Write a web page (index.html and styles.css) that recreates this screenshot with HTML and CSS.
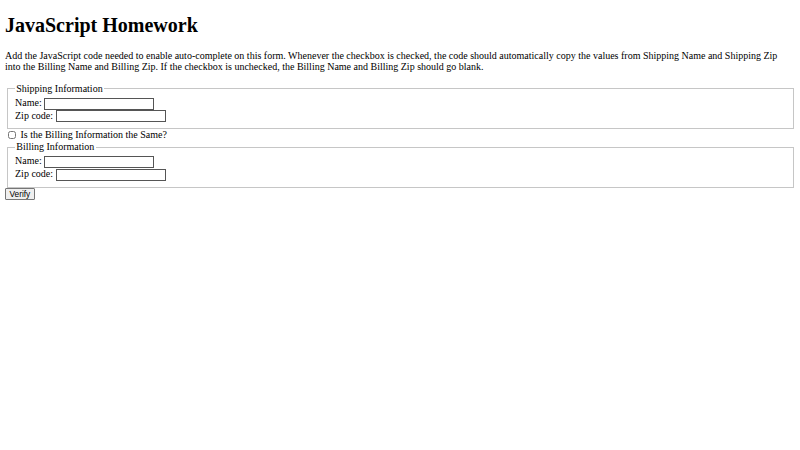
FILE: index.html
```html
<!DOCTYPE html>
<html lang="en">
<head>
<meta charset="utf-8">
<title>JavaScript Homework</title>
<link rel="stylesheet" href="styles.css">
</head>
<body class="page">
<h1 class="title">JavaScript Homework</h1>
<p class="intro">Add the JavaScript code needed to enable auto-complete on this form. Whenever the checkbox is checked, the code should automatically copy the values from Shipping Name and Shipping Zip into the Billing Name and Billing Zip. If the checkbox is unchecked, the Billing Name and Billing Zip should go blank.</p>
<form class="form">
<fieldset class="group">
<legend class="group-legend">Shipping Information</legend>
<label for="shippingName">Name:</label>
<input type="text" name="shipName" id="shippingName" class="field"><br>
<label for="shippingZip">Zip code:</label>
<input type="text" name="shipZip" id="shippingZip" class="field">
</fieldset>
<input type="checkbox" id="same" name="same" class="check">
<label for="same">Is the Billing Information the Same?</label>
<fieldset class="group">
<legend class="group-legend">Billing Information</legend>
<label for="billingName">Name:</label>
<input type="text" name="billName" id="billingName" class="field"><br>
<label for="billingZip">Zip code:</label>
<input type="text" name="billZip" id="billingZip" class="field">
</fieldset>
<input type="submit" value="Verify" class="verify">
</form>
</body>
</html>
```

FILE: styles.css
```css
.page {
  margin: 5px;
  font-family: "Liberation Serif", "Times New Roman", serif;
  font-size: 10px;
  background: #fff;
  color: #000;
}
.title {
  font-size: 20px;
  margin: 8.5px 0 13.4px;
}
.intro {
  margin: 10px 0;
  line-height: 11.5px;
}
.form {
  margin: 0;
}
.group {
  margin: 0 1.5px;
  padding: 2.5px 7.5px 6px;
  border: 1.5px solid #c6c6c6;
}
.group-legend {
  padding: 0 1.25px;
  line-height: 11.5px;
}
.field {
  box-sizing: border-box;
  width: 110px;
  height: 12px;
  margin: 0;
  padding: 0 1px;
  border: 1px solid #555;
  border-radius: 0;
  font-family: "Liberation Sans", Arial, sans-serif;
  font-size: 8px;
  vertical-align: middle;
}
.check {
  width: 8px;
  height: 8px;
  margin: 2px 2px 2px 3px;
  vertical-align: -1px;
}
.verify {
  box-sizing: border-box;
  height: 12px;
  margin: 0;
  padding: 0 3.5px;
  font-family: "Liberation Sans", Arial, sans-serif;
  font-size: 8.3px;
  line-height: 1;
  background: #efefef;
  border: 1px solid #767676;
  border-radius: 1px;
}
```
